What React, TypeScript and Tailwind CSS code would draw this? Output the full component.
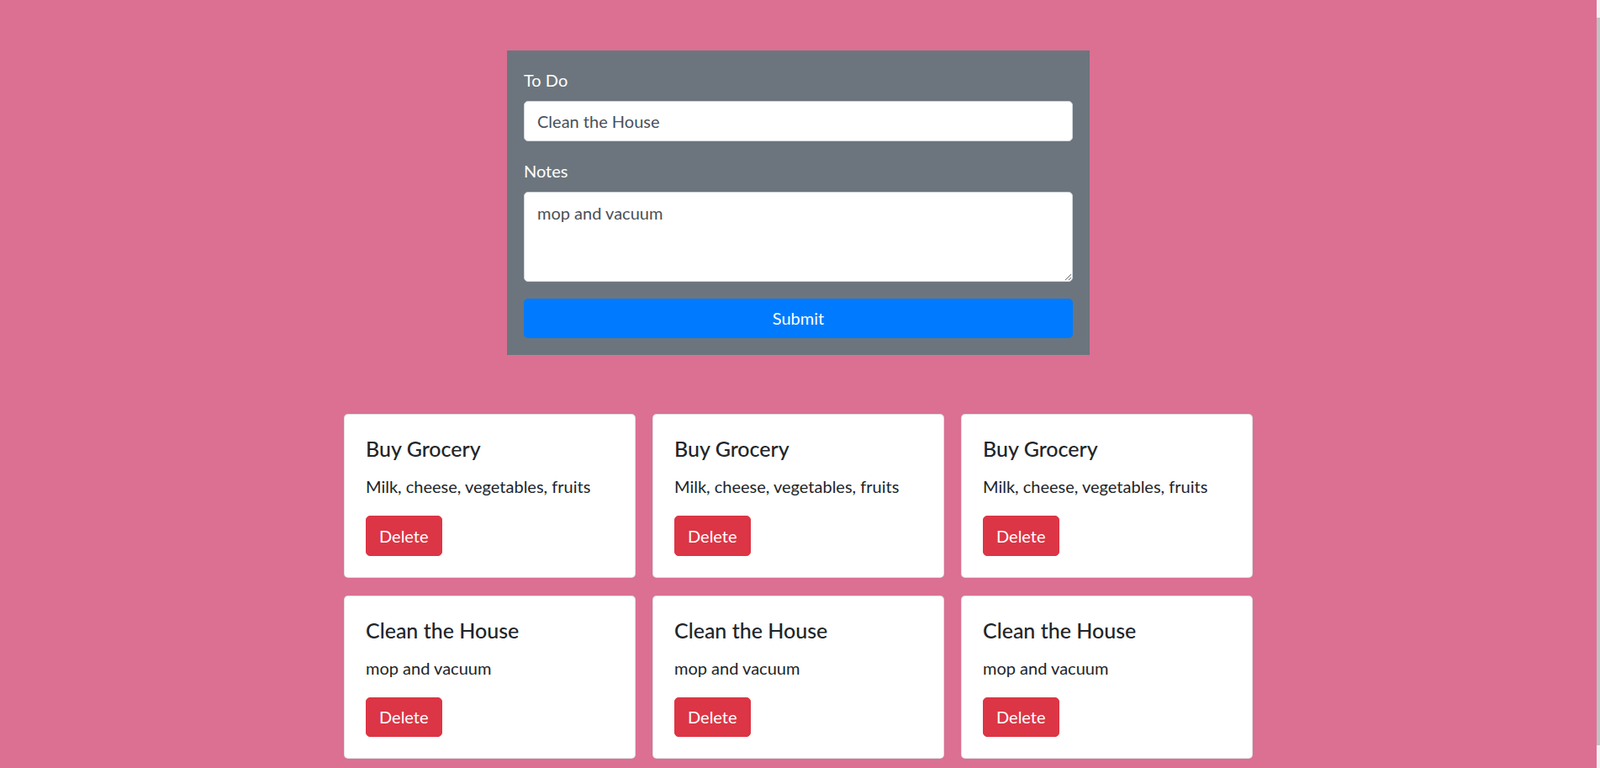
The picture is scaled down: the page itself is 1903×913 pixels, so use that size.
import { useState } from "react";

type Todo = {
  title: string;
  notes: string;
};

const todos: Todo[] = [
  { title: "Buy Grocery", notes: "Milk, cheese, vegetables, fruits" },
  { title: "Buy Grocery", notes: "Milk, cheese, vegetables, fruits" },
  { title: "Buy Grocery", notes: "Milk, cheese, vegetables, fruits" },
  { title: "Clean the House", notes: "mop and vacuum" },
  { title: "Clean the House", notes: "mop and vacuum" },
  { title: "Clean the House", notes: "mop and vacuum" },
];

function TodoCard({ title, notes }: Todo) {
  return (
    <div className="rounded-[5px] border border-black/[0.125] bg-white p-[25px] text-[#212529]">
      <h5 className="mb-[15px] text-[25px] font-medium leading-[30px]">{title}</h5>
      <p className="mb-[20px] text-[20px] leading-[30px]">{notes}</p>
      <button
        type="button"
        className="h-[47.5px] rounded-[5px] border border-[#dc3545] bg-[#dc3545] px-[15px] text-[20px] leading-[30px] text-white"
      >
        Delete
      </button>
    </div>
  );
}

export default function App() {
  const [title, setTitle] = useState("Clean the House");
  const [notes, setNotes] = useState("mop and vacuum");

  return (
    <div
      className="flex h-screen overflow-hidden"
      style={{ fontFamily: 'Lato, "Noto Sans", sans-serif' }}
    >
      <main className="flex flex-1 flex-col items-center bg-[#db7093] pt-[60px]">
        <form
          className="w-[693px] bg-[#6c757d] p-[20px]"
          onSubmit={(event) => event.preventDefault()}
        >
          <div className="mb-[20px]">
            <label className="mb-[10px] block text-[20px] leading-[30px] text-white">To Do</label>
            <input
              className="block h-[47.5px] w-full rounded-[5px] border border-[#ced4da] bg-white px-[15px] text-[20px] leading-[30px] text-[#495057] outline-none"
              value={title}
              onChange={(event) => setTitle(event.target.value)}
            />
          </div>
          <div className="mb-[20px]">
            <label className="mb-[10px] block text-[20px] leading-[30px] text-white">Notes</label>
            <textarea
              className="block h-[107px] w-full rounded-[5px] border border-[#ced4da] bg-white px-[15px] py-[9px] text-[20px] leading-[30px] text-[#495057] outline-none"
              value={notes}
              onChange={(event) => setNotes(event.target.value)}
            />
          </div>
          <button
            type="submit"
            className="block h-[47.5px] w-full rounded-[5px] bg-[#007bff] text-[20px] leading-[30px] text-white"
          >
            Submit
          </button>
        </form>

        <div className="mt-[70px] grid w-[1081px] grid-cols-3 gap-x-[20px] gap-y-[21px]">
          {todos.map((todo, index) => (
            <TodoCard key={index} {...todo} />
          ))}
        </div>
      </main>
      <div className="flex w-[4px] justify-end bg-[#f1f1f1] pt-[21px] pb-[27px]">
        <div className="w-[2px] flex-1 bg-[#c1c1c1]" />
      </div>
    </div>
  );
}
